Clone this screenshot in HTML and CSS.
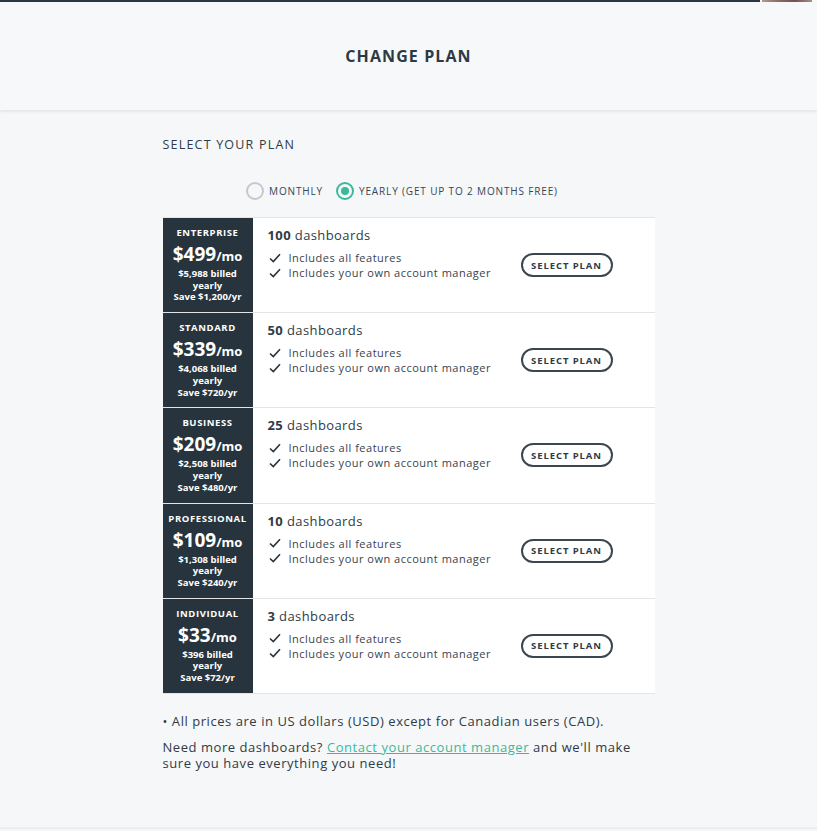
FILE: index.html
```html
<!DOCTYPE html>
<html lang="en">
<head>
    <meta charset="UTF-8">
    <meta name="viewport" content="width=device-width, initial-scale=1.0">
    <title>Change Plan</title>
    <link rel="stylesheet" href="styles.css">
</head>
<body>
    <div class="topbar">
        <div class="topbar-line"></div>
        <div class="topbar-thumb"></div>
    </div>

    <div class="header">
        <h1 class="title">CHANGE PLAN</h1>
    </div>

    <div class="content">
        <div class="section-label">SELECT YOUR PLAN</div>

        <div class="billing-toggle">
            <label class="option">
                <span class="radio"></span>
                MONTHLY
            </label>
            <label class="option">
                <span class="radio checked"></span>
                YEARLY (GET UP TO 2 MONTHS FREE)
            </label>
        </div>

        <div class="plans">
            <div class="plan">
                <div class="plan-price">
                    <div class="plan-name">ENTERPRISE</div>
                    <div class="price"><span class="amount">$499</span>/mo</div>
                    <div class="billed">$5,988 billed<br>yearly<br>Save $1,200/yr</div>
                </div>
                <div class="plan-info">
                    <div class="details">
                        <div class="dashboards"><b>100</b> dashboards</div>
                        <div class="feature"><svg class="check" viewBox="0 0 12 10"><path d="M1 5.5 L4.3 8.6 L11 1.2"/></svg>Includes all features</div>
                        <div class="feature"><svg class="check" viewBox="0 0 12 10"><path d="M1 5.5 L4.3 8.6 L11 1.2"/></svg>Includes your own account manager</div>
                    </div>
                    <button class="select-btn">SELECT PLAN</button>
                </div>
            </div>

            <div class="plan">
                <div class="plan-price">
                    <div class="plan-name">STANDARD</div>
                    <div class="price"><span class="amount">$339</span>/mo</div>
                    <div class="billed">$4,068 billed<br>yearly<br>Save $720/yr</div>
                </div>
                <div class="plan-info">
                    <div class="details">
                        <div class="dashboards"><b>50</b> dashboards</div>
                        <div class="feature"><svg class="check" viewBox="0 0 12 10"><path d="M1 5.5 L4.3 8.6 L11 1.2"/></svg>Includes all features</div>
                        <div class="feature"><svg class="check" viewBox="0 0 12 10"><path d="M1 5.5 L4.3 8.6 L11 1.2"/></svg>Includes your own account manager</div>
                    </div>
                    <button class="select-btn">SELECT PLAN</button>
                </div>
            </div>

            <div class="plan">
                <div class="plan-price">
                    <div class="plan-name">BUSINESS</div>
                    <div class="price"><span class="amount">$209</span>/mo</div>
                    <div class="billed">$2,508 billed<br>yearly<br>Save $480/yr</div>
                </div>
                <div class="plan-info">
                    <div class="details">
                        <div class="dashboards"><b>25</b> dashboards</div>
                        <div class="feature"><svg class="check" viewBox="0 0 12 10"><path d="M1 5.5 L4.3 8.6 L11 1.2"/></svg>Includes all features</div>
                        <div class="feature"><svg class="check" viewBox="0 0 12 10"><path d="M1 5.5 L4.3 8.6 L11 1.2"/></svg>Includes your own account manager</div>
                    </div>
                    <button class="select-btn">SELECT PLAN</button>
                </div>
            </div>

            <div class="plan">
                <div class="plan-price">
                    <div class="plan-name">PROFESSIONAL</div>
                    <div class="price"><span class="amount">$109</span>/mo</div>
                    <div class="billed">$1,308 billed<br>yearly<br>Save $240/yr</div>
                </div>
                <div class="plan-info">
                    <div class="details">
                        <div class="dashboards"><b>10</b> dashboards</div>
                        <div class="feature"><svg class="check" viewBox="0 0 12 10"><path d="M1 5.5 L4.3 8.6 L11 1.2"/></svg>Includes all features</div>
                        <div class="feature"><svg class="check" viewBox="0 0 12 10"><path d="M1 5.5 L4.3 8.6 L11 1.2"/></svg>Includes your own account manager</div>
                    </div>
                    <button class="select-btn">SELECT PLAN</button>
                </div>
            </div>

            <div class="plan">
                <div class="plan-price">
                    <div class="plan-name">INDIVIDUAL</div>
                    <div class="price"><span class="amount">$33</span>/mo</div>
                    <div class="billed">$396 billed<br>yearly<br>Save $72/yr</div>
                </div>
                <div class="plan-info">
                    <div class="details">
                        <div class="dashboards"><b>3</b> dashboards</div>
                        <div class="feature"><svg class="check" viewBox="0 0 12 10"><path d="M1 5.5 L4.3 8.6 L11 1.2"/></svg>Includes all features</div>
                        <div class="feature"><svg class="check" viewBox="0 0 12 10"><path d="M1 5.5 L4.3 8.6 L11 1.2"/></svg>Includes your own account manager</div>
                    </div>
                    <button class="select-btn">SELECT PLAN</button>
                </div>
            </div>
        </div>

        <p class="note">&bull; All prices are in US dollars (USD) except for Canadian users (CAD).</p>
        <p class="note">Need more dashboards? <a href="#">Contact your account manager</a> and we'll make sure you have everything you need!</p>
    </div>
</body>
</html>
```

FILE: styles.css
```css
body {
    font-family: 'Open Sans', 'Noto Sans', sans-serif;
    background-color: #f6f7f9;
    color: #2f3b45;
    margin: 0;
    min-height: 829px;
    box-shadow: inset 0 -2px 2px -1px #e3e5e8;
}

.topbar {
    display: flex;
    height: 2px;
}

.topbar-line {
    flex: 1;
    background-color: #2a3640;
}

.topbar-thumb {
    width: 50px;
    margin: 0 5px 0 2px;
    background: linear-gradient(to right, #b59a86, #8a6a62, #6e5458, #a88f80);
}

.header {
    height: 108px;
    display: flex;
    align-items: center;
    justify-content: center;
    background-color: #f7f8fa;
    box-shadow: 0 2px 3px rgba(0, 0, 0, 0.07);
}

.title {
    margin: 0;
    font-size: 16px;
    font-weight: 700;
    letter-spacing: 1.1px;
    color: #2d3a44;
}

.content {
    width: 492px;
    margin: 0 auto;
    padding-top: 27px;
}

.section-label {
    font-size: 12.5px;
    letter-spacing: 1.2px;
    line-height: 16px;
}

.billing-toggle {
    display: flex;
    justify-content: center;
    gap: 13px;
    margin: 28px 0 0 -13px;
    height: 20px;
    align-items: center;
}

.option {
    display: flex;
    align-items: center;
    gap: 5px;
    font-size: 10px;
    letter-spacing: 0.85px;
    color: #3a4650;
}

.radio {
    flex: none;
    width: 14px;
    height: 14px;
    border: 2px solid #c6c9cc;
    border-radius: 50%;
    display: flex;
    align-items: center;
    justify-content: center;
}

.radio.checked {
    border-color: #3bb99a;
}

.radio.checked::after {
    content: "";
    width: 8px;
    height: 8px;
    border-radius: 50%;
    background-color: #3bb99a;
}

.plans {
    margin-top: 16px;
    border-top: 1px solid #e1e5e8;
}

.plan {
    display: grid;
    grid-template-columns: 90px 1fr;
    height: 95.2px;
    border-bottom: 1px solid #e1e5e8;
    box-sizing: border-box;
}

.plan-price {
    background-color: #27343d;
    color: #ffffff;
    text-align: center;
    padding-top: 9px;
    font-weight: 700;
}

.plan-name {
    font-size: 9.5px;
    letter-spacing: 0.6px;
    line-height: 12px;
}

.price {
    font-size: 13px;
    margin-top: 4px;
    line-height: 23px;
}

.amount {
    font-size: 19px;
}

.billed {
    font-size: 9.5px;
    line-height: 11.7px;
}

.plan-info {
    background-color: #ffffff;
    display: flex;
    align-items: center;
    padding: 0 42px 0 15px;
}

.details {
    flex: 1;
    align-self: flex-start;
    padding-top: 8px;
}

.dashboards {
    font-size: 13px;
    letter-spacing: 0.4px;
    line-height: 18px;
    margin-bottom: 6px;
}

.feature {
    display: flex;
    align-items: center;
    font-size: 11px;
    letter-spacing: 0.5px;
    line-height: 15px;
    color: #38444e;
}

.check {
    width: 12px;
    height: 10px;
    margin: 0 8px 0 1px;
    fill: none;
    stroke: #27343d;
    stroke-width: 1.6;
}

.select-btn {
    font-family: inherit;
    width: 92px;
    height: 24px;
    padding: 0;
    border: 2px solid #3a4751;
    border-radius: 12px;
    background-color: #ffffff;
    color: #2f3b45;
    font-size: 9.5px;
    font-weight: 700;
    letter-spacing: 0.9px;
    cursor: pointer;
}

.note {
    font-size: 13px;
    letter-spacing: 0.55px;
    line-height: 16px;
    margin: 19px 0 0;
    color: #2f3b45;
}

.note + .note {
    margin-top: 10px;
}

.note a {
    color: #3bb99a;
}
```
